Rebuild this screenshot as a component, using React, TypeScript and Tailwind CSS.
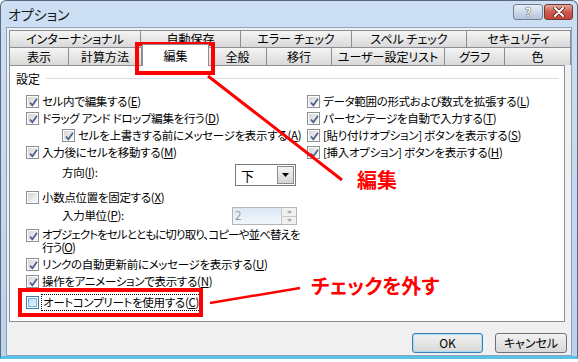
import React from "react"

const tabsTop = [
  { label: "インターナショナル", w: "w-[132px]" },
  { label: "自動保存", w: "w-[100px]" },
  { label: "エラー チェック", w: "w-[111px]" },
  { label: "スペル チェック", w: "w-[115px]" },
  { label: "セキュリティ", w: "w-[104px]" },
]

const tabsBottom = [
  { label: "表示", w: "w-[60px]" },
  { label: "計算方法", w: "w-[73px]" },
  { label: "編集", w: "w-[67px]", active: true },
  { label: "全般", w: "w-[58px]" },
  { label: "移行", w: "w-[65px]" },
  { label: "ユーザー設定リスト", w: "w-[113px]" },
  { label: "グラフ", w: "w-[60px]" },
  { label: "色", w: "w-[66px]" },
]

function Box({ checked, hover }: { checked?: boolean; hover?: boolean }) {
  return (
    <span
      className={`relative flex items-center justify-center w-[13px] h-[13px] shrink-0 border ${
        hover ? "border-[#3d7bad] bg-white" : "border-[#8e8f8f] bg-white"
      }`}
    >
      <span
        className={`w-[9px] h-[9px] ${
          hover ? "bg-gradient-to-br from-[#b1dffd] to-[#e3f3fe] border border-[#79b3dc]" : "bg-gradient-to-br from-[#d5d5d5] to-[#f8f8f8]"
        }`}
      />
      {checked && (
        <svg className="absolute left-[1px] top-[1px]" width="11" height="11" viewBox="0 0 11 11">
          <path d="M2 5.5 L4.3 8.3 L9 1.8" fill="none" stroke="#4a5d8f" strokeWidth="1.7" />
        </svg>
      )}
    </span>
  )
}

function Label({ text, k, tail = "" }: { text: string; k: string; tail?: string }) {
  return (
    <span className="whitespace-nowrap">
      {text}(<u>{k}</u>){tail}
    </span>
  )
}

function Check({ text, k, checked = true }: { text: string; k: string; checked?: boolean }) {
  return (
    <div className="flex items-center gap-[3px] h-[17px]">
      <Box checked={checked} />
      <Label text={text} k={k} />
    </div>
  )
}

export default function App() {
  return (
    <div className="relative w-[578px] h-[362px] overflow-hidden bg-white font-['Noto_Sans_CJK_JP',sans-serif] text-[12px] leading-none text-black [font-feature-settings:'palt']">
      <div className="flex flex-col w-[578px] h-[359px] bg-gradient-to-b from-[#cddff3] to-[#bcd1ea] border border-[#5a6b80] rounded-t-[6px] border-b-[3px] border-b-[#58c2e4]">
        {/* title bar */}
        <div className="flex h-[26px] items-start justify-between pl-[7px] pr-[4px]">
          <span className="mt-[6px] text-[14px] text-[#1a1a1a]">オプション</span>
          <div className="flex gap-[1px] mt-[3px]">
            <div className="flex items-center justify-center w-[30px] h-[16px] rounded-[3px] border border-[#6f7f95] bg-gradient-to-b from-[#e8eef7] to-[#b4c4da] text-[12px] font-bold text-white [text-shadow:0_0_1px_#333,0_0_1px_#333]">
              ?
            </div>
            <div className="flex items-center justify-center w-[29px] h-[16px] rounded-[3px] border border-[#6b3a34] bg-gradient-to-b from-[#e5a99f] via-[#c9594b] to-[#c4453a]">
              <svg width="12" height="10" viewBox="0 0 12 10">
                <path d="M2 1 L10 9 M10 1 L2 9" stroke="#4a1a14" strokeWidth="3.4" strokeLinecap="round" />
                <path d="M2 1 L10 9 M10 1 L2 9" stroke="#ffffff" strokeWidth="2" strokeLinecap="round" />
              </svg>
            </div>
          </div>
        </div>

        {/* client */}
        <div className="flex flex-col flex-1 mx-[5px] border border-[#8da2bc] bg-[#f0f0f0] pt-[2px] pl-[2px]">
          <div className="flex">
            {tabsTop.map((t, i) => (
              <div
                key={t.label}
                className={`${t.w} h-[17px] flex items-center justify-center border-t border-r ${i === 0 ? "border-l" : ""} border-[#8b8e96] bg-gradient-to-b from-[#f5f5f5] to-[#d9d9d9] whitespace-nowrap`}
              >
                {t.label}
              </div>
            ))}
          </div>
          <div className="flex items-end h-[18px]">
            {tabsBottom.map((t, i) =>
              t.active ? (
                <div
                  key={t.label}
                  className={`${t.w} relative z-10 -mb-px h-[22px] flex items-center justify-center border-x border-t border-[#8b8e96] bg-white`}
                >
                  {t.label}
                </div>
              ) : (
                <div
                  key={t.label}
                  className={`${t.w} h-[18px] flex items-center justify-center border-t border-r ${i === 0 ? "border-l" : ""} border-[#8b8e96] bg-gradient-to-b from-[#f5f5f5] to-[#d9d9d9] whitespace-nowrap`}
                >
                  {t.label}
                </div>
              )
            )}
          </div>

          {/* panel */}
          <div className="w-[556px] h-[257px] border border-[#8b8e96] bg-white flex flex-col text-[11.5px] tracking-[-0.3px]">
            <div className="flex items-center h-[18px] mt-[4px] text-[12px] tracking-normal">
              <span className="pl-[6px]">設定</span>
              <span className="flex-1 ml-[6px] mr-[5px] h-[2px] border-t border-[#d5dfe5] border-b border-b-white" />
            </div>

            <div className="flex mt-[5px] pl-[16px]">
              <div className="w-[281px] flex flex-col">
                <Check text="セル内で編集する" k="E" />
                <Check text="ドラッグ アンド ドロップ編集を行う" k="D" />
                <div className="pl-[36px]">
                  <Check text="セルを上書きする前にメッセージを表示する" k="A" />
                </div>
                <Check text="入力後にセルを移動する" k="M" />
              </div>
              <div className="flex flex-col">
                <Check text="データ範囲の形式および数式を拡張する" k="L" />
                <Check text="パーセンテージを自動で入力する" k="T" />
                <Check text="[貼り付けオプション] ボタンを表示する" k="S" />
                <Check text="[挿入オプション] ボタンを表示する" k="H" />
              </div>
            </div>

            <div className="flex flex-col pl-[16px]">
              <div className="flex items-center h-[22px] mt-[3px] pl-[36px]">
                <span className="w-[173px] -mt-[4px]">
                  <Label text="方向" k="I" tail=":" />
                </span>
                <div className="flex w-[61px] h-[22px] border border-[#7a7a7a] bg-white">
                  <span className="flex-1 flex items-center pl-[5px] text-[13px]">下</span>
                  <span className="w-[17px] m-[1px] flex items-center justify-center border border-[#8c8c8c] bg-gradient-to-b from-[#f4f4f4] to-[#d4d4d4]">
                    <svg width="7" height="4" viewBox="0 0 7 4">
                      <path d="M0 0 H7 L3.5 4 Z" fill="#000" />
                    </svg>
                  </span>
                </div>
              </div>

              <div className="mt-[3px]">
                <Check text="小数点位置を固定する" k="X" checked={false} />
              </div>

              <div className="flex items-center h-[18px] mt-[1px] pl-[36px]">
                <span className="w-[170px]">
                  <Label text="入力単位" k="P" tail=":" />
                </span>
                <div className="flex w-[65px] h-[18px] border border-[#b5b5b5] bg-gradient-to-b from-[#dce8f6] to-[#f2f6fb]">
                  <span className="flex-1 flex items-center pl-[2px] text-[#9a9a9a]">2</span>
                  <span className="w-[15px] flex flex-col border-l border-[#c8c8c8]">
                    <span className="flex-1 flex items-center justify-center bg-[#f0f0f0] border-b border-[#c8c8c8]">
                      <svg width="5" height="3" viewBox="0 0 5 3">
                        <path d="M0 3 H5 L2.5 0 Z" fill="#a8a8a8" />
                      </svg>
                    </span>
                    <span className="flex-1 flex items-center justify-center bg-[#f0f0f0]">
                      <svg width="5" height="3" viewBox="0 0 5 3">
                        <path d="M0 0 H5 L2.5 3 Z" fill="#a8a8a8" />
                      </svg>
                    </span>
                  </span>
                </div>
              </div>

              <div className="flex items-start gap-[3px] mt-[3px] h-[26px]">
                <span className="mt-[1px]">
                  <Box checked />
                </span>
                <span className="leading-[13px] tracking-[-0.9px]">
                  オブジェクトをセルとともに切り取り、コピーや並べ替えを
                  <br />
                  <Label text="行う" k="O" />
                </span>
              </div>

              <div className="mt-[2px]">
                <Check text="リンクの自動更新前にメッセージを表示する" k="U" />
              </div>
              <Check text="操作をアニメーションで表示する" k="N" />

              <div className="flex items-center gap-[2px] h-[17px] mt-[4px]">
                <Box hover />
                <span className="border border-dotted border-black px-[1px] h-[17px] flex items-center">
                  <Label text="オートコンプリートを使用する" k="C" />
                </span>
              </div>
            </div>
          </div>

          {/* buttons */}
          <div className="flex justify-end gap-[12px] mt-[11px] pr-[4px]">
            <div className="w-[71px] h-[20px] flex items-center justify-center rounded-[3px] border border-[#3c7fb1] bg-gradient-to-b from-[#f2f2f2] to-[#d8d8d8] shadow-[inset_0_0_0_1px_#a6dcf5]">
              OK
            </div>
            <div className="w-[72px] h-[20px] flex items-center justify-center rounded-[3px] border border-[#707070] bg-gradient-to-b from-[#f2f2f2] to-[#d8d8d8]">
              キャンセル
            </div>
          </div>
        </div>
      </div>

      {/* annotations */}
      <div className="absolute left-[135px] top-[42px] w-[80px] h-[33px] border-4 border-[#ff0000]" />
      <div className="absolute left-[18px] top-[288px] w-[185px] h-[29px] border-4 border-[#ff0000]" />
      <svg className="absolute left-0 top-0 pointer-events-none" width="578" height="362" viewBox="0 0 578 362">
        <line x1="208" y1="76" x2="342" y2="180" stroke="#ff0000" strokeWidth="3" />
        <line x1="210" y1="303" x2="300" y2="288" stroke="#ff0000" strokeWidth="2.5" />
      </svg>
      <span className="absolute left-[357px] top-[170px] text-[20px] font-bold text-[#ff0000]">編集</span>
      <span className="absolute left-[311px] top-[276px] text-[20px] font-bold text-[#ff0000] whitespace-nowrap">チェックを外す</span>
    </div>
  )
}
